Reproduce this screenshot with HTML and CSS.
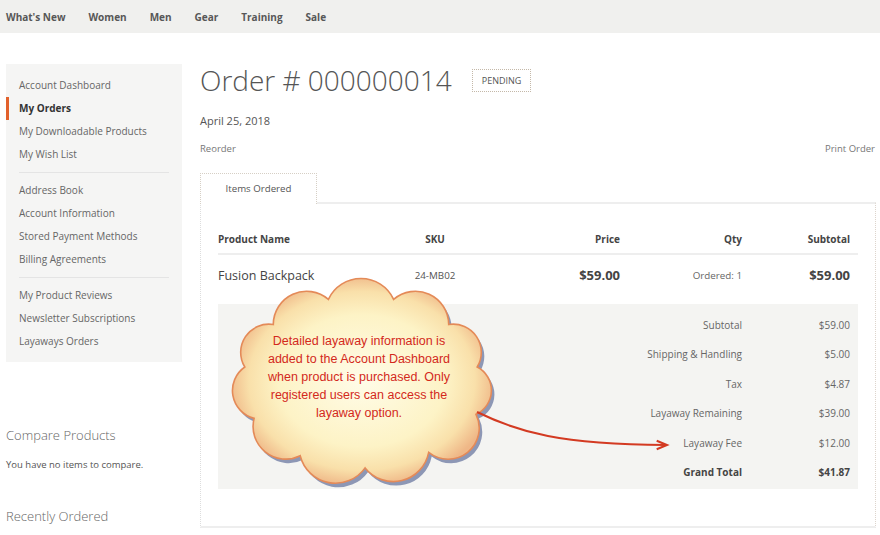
FILE: index.html
```html
<!DOCTYPE html>
<html>
<head>
<meta charset="utf-8">
<title>Order # 000000014</title>
<link rel="stylesheet" href="styles.css">
</head>
<body>
<nav class="topnav">
  <a>What's New</a>
  <a>Women</a>
  <a>Men</a>
  <a>Gear</a>
  <a>Training</a>
  <a>Sale</a>
</nav>
<div class="layout">
  <aside class="sidebar">
    <div class="account-nav">
      <a class="item">Account Dashboard</a>
      <a class="item active">My Orders</a>
      <a class="item">My Downloadable Products</a>
      <a class="item">My Wish List</a>
      <div class="sep"></div>
      <a class="item">Address Book</a>
      <a class="item">Account Information</a>
      <a class="item">Stored Payment Methods</a>
      <a class="item">Billing Agreements</a>
      <div class="sep"></div>
      <a class="item">My Product Reviews</a>
      <a class="item">Newsletter Subscriptions</a>
      <a class="item">Layaways Orders</a>
    </div>
    <div class="block-title compare-title">Compare Products</div>
    <div class="compare-empty">You have no items to compare.</div>
    <div class="block-title recent-title">Recently Ordered</div>
  </aside>
  <main class="main">
    <div class="title-row">
      <h1 class="page-title">Order # 000000014</h1>
      <span class="badge">PENDING</span>
    </div>
    <div class="order-date">April 25, 2018</div>
    <div class="actions">
      <a>Reorder</a>
      <a>Print Order</a>
    </div>
    <div class="tabs">
      <div class="tab">Items Ordered</div>
    </div>
    <section class="panel">
      <div class="grid thead">
        <div>Product Name</div>
        <div class="c-center">SKU</div>
        <div class="c-right">Price</div>
        <div class="c-right">Qty</div>
        <div class="c-right">Subtotal</div>
      </div>
      <div class="grid item-row">
        <div class="p-name">Fusion Backpack</div>
        <div class="c-center p-sku">24-MB02</div>
        <div class="c-right p-price">$59.00</div>
        <div class="c-right p-qty">Ordered: 1</div>
        <div class="c-right p-price">$59.00</div>
      </div>
      <div class="totals">
        <div class="t-label">Subtotal</div><div class="t-val">$59.00</div>
        <div class="t-label">Shipping &amp; Handling</div><div class="t-val">$5.00</div>
        <div class="t-label">Tax</div><div class="t-val">$4.87</div>
        <div class="t-label">Layaway Remaining</div><div class="t-val">$39.00</div>
        <div class="t-label">Layaway Fee</div><div class="t-val">$12.00</div>
        <div class="t-label grand">Grand Total</div><div class="t-val grand">$41.87</div>
      </div>
      <div class="callout">
        <svg class="callout-svg" width="470" height="230" viewBox="0 0 470 230">
          <defs>
            <radialGradient id="cg" cx="50%" cy="50%" r="52%">
              <stop offset="0" stop-color="#fffce8"/>
              <stop offset="0.62" stop-color="#fdf3c6"/>
              <stop offset="0.84" stop-color="#f9e0aa"/>
              <stop offset="1" stop-color="#efb787"/>
            </radialGradient>
          </defs>
          <path transform="translate(3,4)" fill="#8d97b5" d="M24.8,94 A28.2,28.2 0 0 1 53.3,51.5 A33.3,33.3 0 0 1 108.4,26.4 A35.9,35.9 0 0 1 173.6,26.4 A33.3,33.3 0 0 1 228.7,51.5 A28.2,28.2 0 0 1 257.2,94 A26.3,26.3 0 0 1 256,141.3 A31.1,31.1 0 0 1 208.7,179.4 A36,36 0 0 1 145.1,194.9 A36.3,36.3 0 0 1 80.2,182.7 A32.6,32.6 0 0 1 34.1,145.4 A28.7,28.7 0 0 1 24.8,94 Z"/>
          <path fill="url(#cg)" stroke="#e48a58" stroke-width="1.6" d="M24.8,94 A28.2,28.2 0 0 1 53.3,51.5 A33.3,33.3 0 0 1 108.4,26.4 A35.9,35.9 0 0 1 173.6,26.4 A33.3,33.3 0 0 1 228.7,51.5 A28.2,28.2 0 0 1 257.2,94 A26.3,26.3 0 0 1 256,141.3 A31.1,31.1 0 0 1 208.7,179.4 A36,36 0 0 1 145.1,194.9 A36.3,36.3 0 0 1 80.2,182.7 A32.6,32.6 0 0 1 34.1,145.4 A28.7,28.7 0 0 1 24.8,94 Z"/>
          <path fill="none" stroke="#d33a22" stroke-width="2" d="M257,139 C300,160 340,171 446,172"/>
          <path fill="none" stroke="#d33a22" stroke-width="2" d="M436.7,167.8 L447,172 L436.7,176.2"/>
        </svg>
        <div class="callout-text">Detailed layaway information is<br>added to the Account Dashboard<br>when product is purchased. Only<br>registered users can access the<br>layaway option.</div>
      </div>
    </section>
  </main>
</div>
</body>
</html>
```
FILE: styles.css
```css
* { box-sizing: border-box; }
body {
  margin: 0;
  font-family: "Open Sans", "Noto Sans", sans-serif;
  color: #555;
  background: #fff;
}
a { text-decoration: none; color: inherit; }

.topnav {
  display: flex;
  align-items: center;
  gap: 23px;
  height: 33px;
  padding-left: 6px;
  background: #f0f0ee;
  font-size: 10px;
  font-weight: 700;
  color: #575757;
}

.layout {
  display: flex;
  gap: 18px;
  padding: 0 4px 0 6px;
}

.sidebar {
  width: 176px;
  flex: none;
  padding-top: 31px;
}
.account-nav {
  background: #f5f5f4;
  padding: 10px 0 9px;
}
.account-nav .item {
  display: block;
  height: 23px;
  line-height: 23px;
  padding-left: 13px;
  font-size: 10px;
  color: #666;
}
.account-nav .item.active {
  font-weight: 700;
  color: #333;
  border-left: 3px solid #e2612c;
  padding-left: 10px;
}
.sep {
  height: 1px;
  background: #e4e4e4;
  margin: 6px 13px 6px 13px;
}
.block-title {
  font-size: 13px;
  font-weight: 300;
  line-height: 18px;
  color: #666;
}
.compare-title { margin-top: 64px; }
.compare-empty {
  margin-top: 14px;
  font-size: 9.5px;
  line-height: 14px;
  color: #555;
}
.recent-title { margin-top: 35px; }

.main {
  flex: 1;
  padding-top: 29px;
}
.title-row {
  display: flex;
  align-items: center;
  gap: 20px;
  height: 36px;
}
.page-title {
  margin: 0;
  font-size: 28px;
  font-weight: 300;
  line-height: 36px;
  color: #555;
}
.badge {
  height: 23px;
  line-height: 21px;
  padding: 0 9px;
  border: 1px dotted #c4b8a8;
  font-size: 9px;
  color: #555;
}
.order-date {
  margin-top: 15px;
  font-size: 11px;
  line-height: 16px;
  color: #555;
}
.actions {
  display: flex;
  justify-content: space-between;
  margin-top: 13px;
  padding-right: 1px;
  font-size: 9.5px;
  line-height: 14px;
  color: #777;
}

.tabs {
  margin-top: 17px;
  display: flex;
  position: relative;
  z-index: 1;
}
.tab {
  width: 117px;
  height: 31px;
  line-height: 29px;
  text-align: center;
  border: 1px dotted #d6cfc5;
  border-bottom: none;
  background: #fff;
  font-size: 9.7px;
  color: #555;
}

.panel {
  position: relative;
  margin-top: -2px;
  border-top: 2px solid #eeeeee;
  border-bottom: 2px solid #eeeeee;
  border-left: 1px dotted #ddd;
  border-right: 1px dotted #ddd4cc;
  padding: 21px 17px 37px 17px;
}

.grid {
  display: grid;
  grid-template-columns: 162px 110px 138px 122px 108px;
  align-items: center;
}
.c-center { text-align: center; }
.c-right { text-align: right; padding-right: 8px; }

.thead {
  height: 30px;
  border-bottom: 2px solid #eeeeee;
  font-size: 10px;
  font-weight: 700;
  color: #444;
}
.item-row {
  height: 40px;
  margin-bottom: 9px;
}
.p-name { font-size: 12.5px; color: #444; }
.p-sku { font-size: 9.8px; color: #555; }
.p-price { font-size: 13px; font-weight: 700; color: #444; }
.p-qty { font-size: 9.8px; color: #666; }

.totals {
  display: grid;
  grid-template-columns: 1fr 108px;
  grid-auto-rows: 29.5px;
  align-items: center;
  padding: 6px 0 2px;
  background: #f4f4f2;
  font-size: 10px;
  color: #666;
}
.t-label, .t-val { text-align: right; padding-right: 8px; }
.grand { font-weight: 700; color: #444; }

.callout {
  position: absolute;
  left: 19px;
  top: 69px;
  width: 470px;
  height: 230px;
}
.callout-svg { display: block; }
.callout-text {
  position: absolute;
  left: 0;
  top: 59px;
  width: 278px;
  text-align: center;
  font-family: "Liberation Sans", Arial, sans-serif;
  font-size: 12.5px;
  line-height: 18px;
  color: #d3291c;
}
```
